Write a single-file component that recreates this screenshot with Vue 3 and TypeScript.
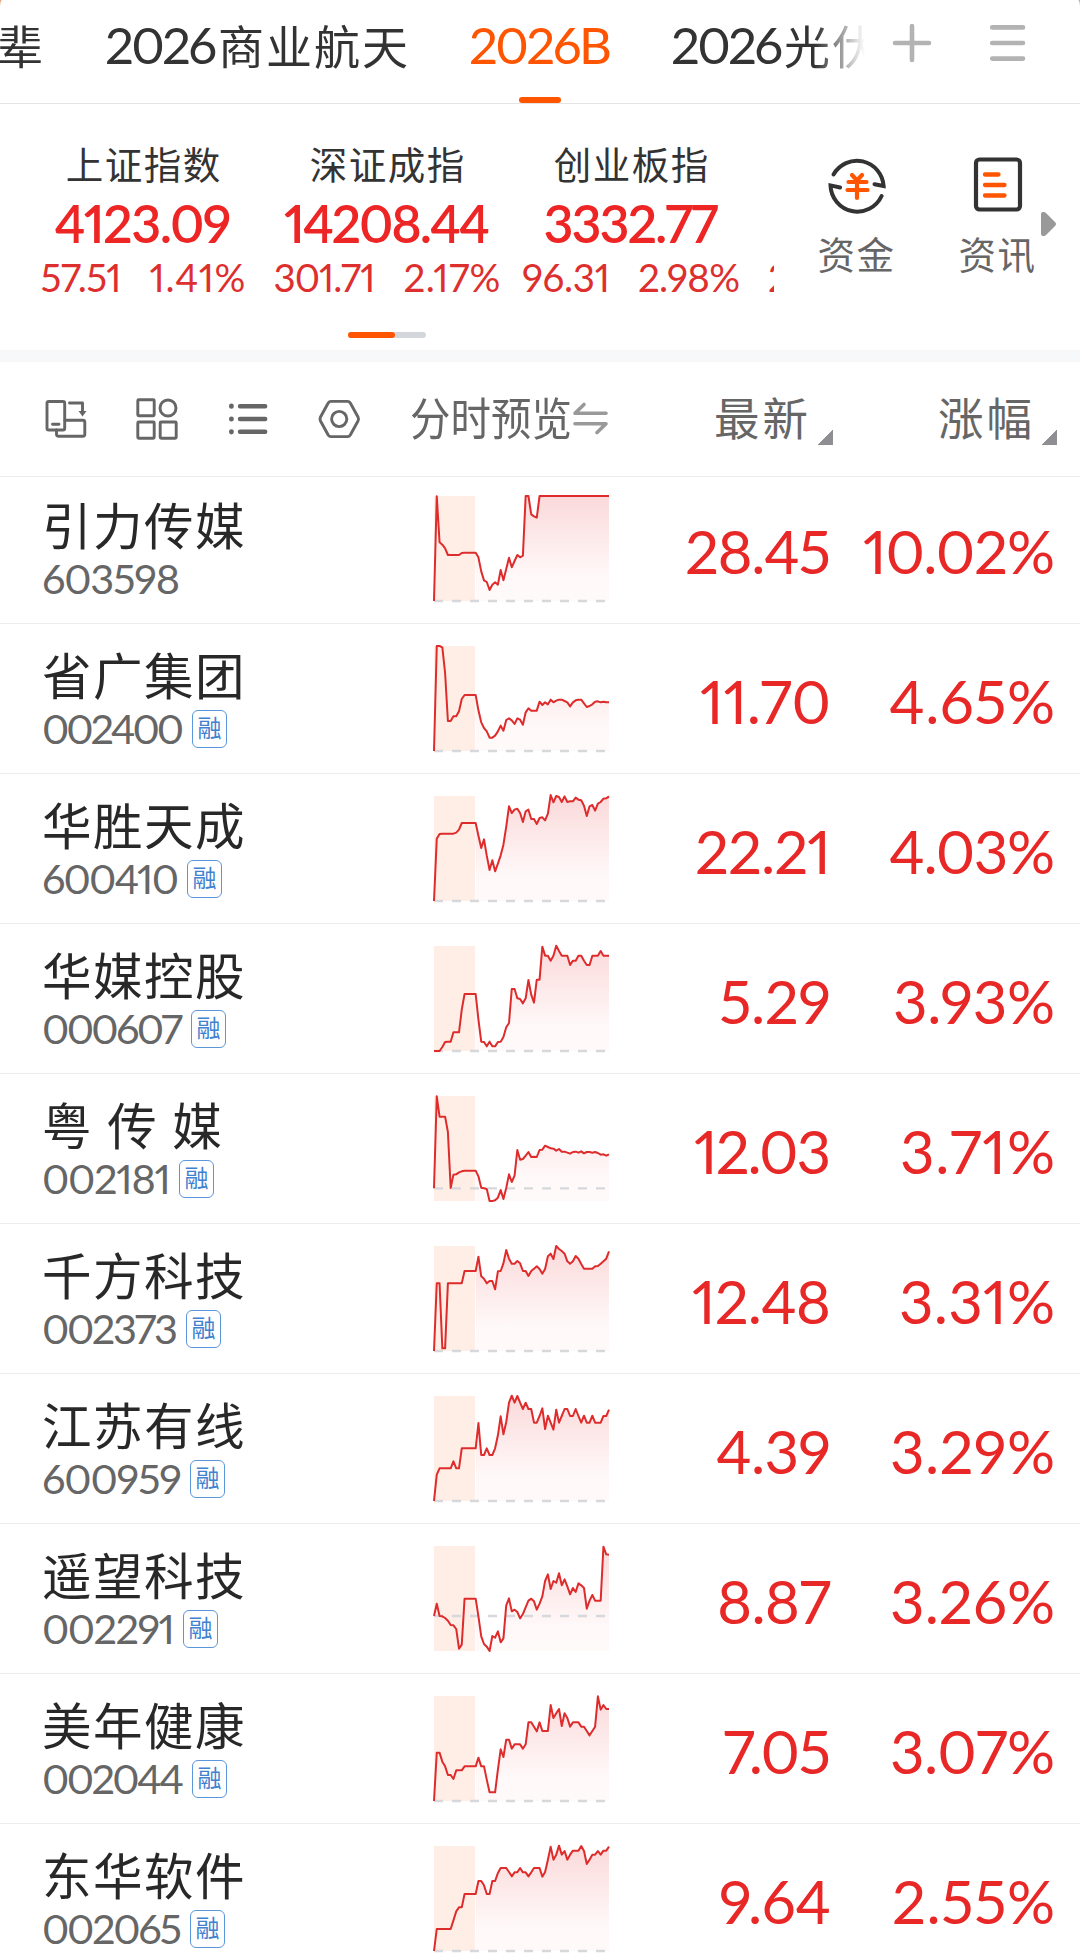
<script setup lang="ts">
import type { Directive } from 'vue'

interface IndexQuote {
  name: string
  value: string
  change: string
  pct: string
  widths: [number, number, number]
}

interface Stock {
  name: string
  code: string
  codeWidth: number
  margin: boolean
  price: string
  priceWidth: number
  pct: string
  pctWidth: number
  baseline: number
  series: string
}

// Tunes letter spacing so that a figure occupies the given width.
const vFit: Directive<HTMLElement, number> = {
  mounted(el, { value }) {
    const count = (el.textContent ?? '').trim().length
    const spacing = (value - el.getBoundingClientRect().width) / (count - 1)
    el.style.letterSpacing = `${spacing.toFixed(3)}px`
    el.style.marginRight = `${(-spacing).toFixed(3)}px`
  },
}

const indices: IndexQuote[] = [
  { name: '上证指数', value: '4123.09', change: '57.51', pct: '1.41%', widths: [177, 81, 96] },
  { name: '深证成指', value: '14208.44', change: '301.71', pct: '2.17%', widths: [206, 102, 97] },
  { name: '创业板指', value: '3332.77', change: '96.31', pct: '2.98%', widths: [175, 88, 102] },
]

const stocks: Stock[] = [
  {
    name: '引力传媒', code: '603598', codeWidth: 138, margin: false,
    price: '28.45', priceWidth: 146, pct: '10.02%', pctWidth: 192, baseline: 315,
    series: '315 1 139 146 157 177*5 171 170*5 184 226 253 258 282 266 259 266 222 253 219 185 214 195 177 184 179 0*2 55 61 65 0*26',
  },
  {
    name: '省广集团', code: '002400', codeWidth: 142, margin: true,
    price: '11.70', priceWidth: 131, pct: '4.65%', pctWidth: 166, baseline: 315,
    series: '315 0*2 4 81 225*2 211*2 196 159 147*5 193 229 246 256 275*2 269 256 239 254 222 217 223 234 217 221 236 199 187 194*3 167 177 169 175 161 169 164 161*2 165 169 181 169 163 161*2 172 183 180 175 167 166 169 167 169*2',
  },
  {
    name: '华胜天成', code: '600410', codeWidth: 137, margin: true,
    price: '22.21', priceWidth: 136, pct: '4.03%', pctWidth: 166, baseline: 315,
    series: '315 128 114 113*5 110 101 81*6 119 156 130 179 222 193 226 203 178 146 92 31 51 41 38 51 78 46 41 69*2 84 66 64 73 53 -3 19 0 3 18 1 18 16*2 5 11 13 29 60 31 27 44 23 18 8 7 1',
  },
  {
    name: '华媒控股', code: '000607', codeWidth: 141, margin: true,
    price: '5.29', priceWidth: 112, pct: '3.93%', pctWidth: 162, baseline: 315,
    series: '315*3 303 288 287*2 259*3 191 144*5 221 287 288 301 287 301*2 288 287 273 244 231 129*2 157 159 172 157 102 146 170 101*2 2 29*2 44 29 -1 15 29*3 57 44*2 29*2 44 57*2 29*3 15 29*3',
  },
  {
    name: '粤 传 媒', code: '002181', codeWidth: 129, margin: true,
    price: '12.03', priceWidth: 137, pct: '3.71%', pctWidth: 155, baseline: 277,
    series: '277 1 62*3 108 276 236 235 229 226 224*5 241 275 277 279 315*2 313 305 282 309 276 235 258 239 162 191 189 179 168 183 182 183 162 161 149 153 157 158 164 159 167*2 170 173 168 167 170 166 172 168*2 170 168 171 176 175 179 175',
  },
  {
    name: '千方科技', code: '002373', codeWidth: 136, margin: true,
    price: '12.48', priceWidth: 139, pct: '3.31%', pctWidth: 156, baseline: 315,
    series: '315 112*2 307*2 112*6 75*5 32 91 98 112 105*2 130 76 75 52 12 38 53*2 45 52 75*2 90 75 68 61 69 83 69 31 23 39 0 9 15 23 46 53 46 30 38 54 68*4 61 60 53 46 38 16',
  },
  {
    name: '江苏有线', code: '600959', codeWidth: 140, margin: true,
    price: '4.39', priceWidth: 115, pct: '3.29%', pctWidth: 165, baseline: 315,
    series: '315 236 217*5 196 217*2 157*6 81 177*2 157 177*2 157 118 61 115 78 20 -1 20 0 20 39 20 39*2 80*2 60 37 99 59 80 101 41 80 60 39*2 60*2 39 60 80 59 80*2 59 80*3 60*2 41',
  },
  {
    name: '遥望科技', code: '002291', codeWidth: 133, margin: true,
    price: '8.87', priceWidth: 114, pct: '3.26%', pctWidth: 165, baseline: 210,
    series: '210 173 210 211 216 224 237 238 249 308 296 158*5 211 271 294 302 315 270 275 256 289 277 178 157 196 191 198 217 204 184 164 158 166 191 173 151 105 85 129 105 110 82 118 100 121 145 126 138 112 118 126 188 164 147 164*3 2 25 26',
  },
  {
    name: '美年健康', code: '002044', codeWidth: 142, margin: true,
    price: '7.05', priceWidth: 108, pct: '3.07%', pctWidth: 165, baseline: 315,
    series: '315 170*2 197 211 237*2 249 223*3 211*5 185 211*2 251 289*3 221 160 183 131*2 158 145*3 158 145 79*2 92 106 79 105*3 27 66 52 39 90 52 66 92 79*3 92*2 105 118 105 92 1 41 27 39*2',
  },
  {
    name: '东华软件', code: '002065', codeWidth: 140, margin: true,
    price: '9.64', priceWidth: 112, pct: '2.55%', pctWidth: 163, baseline: 315,
    series: '315 249*6 223 196 184*2 144*5 105*2 118 144*2 105*2 81 66*3 78 91 79*2 66 79*2 91 79 66*3 92 78 41 2 41 26 -1 26 15 41 26 14*3 0 15 54 41 26*2 15 26 14*2 2',
  },
]

const STEP = 525 / 63
const OPENING = 15

// "v*n" stands for n equal samples.
function samples(series: string): number[] {
  return series.split(' ').flatMap((token) => {
    const [value, times] = token.split('*')
    return Array<number>(Number(times ?? 1)).fill(Number(value))
  })
}

function points(values: number[], from = 0): string {
  return values
    .slice(from)
    .map((y, i) => `${((i + from) * STEP).toFixed(1)},${y}`)
    .join(' ')
}

const rows = stocks.map((stock) => {
  const values = samples(stock.series)
  return {
    ...stock,
    line: points(values),
    area: `${OPENING * STEP},315 ${points(values, OPENING)} 525,315`,
  }
})
</script>

<template>
  <main class="screen">
    <header class="tabs">
      <div class="tab-strip">
        <span class="tab first"><span class="cjk">辈</span></span>
        <span class="tab second"><span v-fit="112" class="num">2026</span><span class="cjk">商业航天</span></span>
        <span class="tab active"><span v-fit="143" class="num">2026B</span></span>
        <span class="tab third"><span v-fit="112" class="num">2026</span><span class="cjk">光伏</span></span>
      </div>
      <svg class="plus" width="40" height="40" viewBox="0 0 40 40">
        <path d="M3 20H37M20 3V37" />
      </svg>
      <svg class="menu" width="38" height="40" viewBox="0 0 38 40">
        <path d="M3.2 4.4H34M3.2 20H34M3.2 35.6H34" />
      </svg>
    </header>

    <section class="market">
      <div class="quotes">
        <div v-for="item in indices" :key="item.name" class="quote">
          <div class="quote-name">{{ item.name }}</div>
          <div class="quote-value"><span v-fit="item.widths[0]">{{ item.value }}</span></div>
          <div class="quote-change">
            <span v-fit="item.widths[1]">{{ item.change }}</span>
            <span v-fit="item.widths[2]">{{ item.pct }}</span>
          </div>
        </div>
        <div class="quote next">
          <div class="quote-change"><span>2</span></div>
        </div>
      </div>
      <div class="shortcut">
        <svg width="62" height="62" viewBox="0 0 62 62">
          <g fill="none" stroke="#333" stroke-width="4" stroke-linecap="round">
            <path d="M7.5 21.5A26.8 27 0 0 1 57.6 33L48.5 31.2" />
            <path d="M55.6 43A26.8 27 0 0 1 4.5 32.4L14 34.5" />
          </g>
          <path d="M26 22L31 27.5L36 22M22.5 29H40.500M21.500 37H41.500M31 27.500V45" fill="none" stroke="#ff5500" stroke-width="4.200" stroke-linecap="round" />
        </svg>
        <span>资金</span>
      </div>
      <div class="shortcut news">
        <svg width="62" height="62" viewBox="0 0 62 62">
          <rect x="9" y="6.500" width="44" height="50" rx="3.500" fill="none" stroke="#333" stroke-width="4.200" />
          <path d="M18 21.500H31.500M18 32H37.500M18 42.500H37.500" stroke="#ff5500" stroke-width="4.300" stroke-linecap="round" />
        </svg>
        <span>资讯</span>
      </div>
      <svg class="more" width="16" height="26" viewBox="0 0 16 26">
        <path d="M0 3Q0 1 2 1Q3.500 .5 5 2L14 11Q16 13 14 15L5 24Q3.500 25.500 2 25Q0 25 0 23Z" fill="#999" />
      </svg>
      <div class="pager"><i></i></div>
    </section>

    <section class="toolbar">
      <svg class="tool" width="44" height="44" viewBox="0 0 44 44">
        <rect x="3" y="4.500" width="17.700" height="28.500" rx="1.800" />
        <path d="M8.500 27.200H15M25.500 6H38.500V15M12.500 33V37Q12.500 39.300 14.800 39.300H38.800Q40.800 39.300 40.800 37.300V25.200Q40.800 23.200 38.800 23.200H21" />
        <path d="M34.500 14H42.500L38.500 19.500Z" fill="#666" stroke="none" />
      </svg>
      <svg class="tool" width="44" height="44" viewBox="0 0 44 44">
        <rect x="2.800" y="2.800" width="16.400" height="16" rx="1" />
        <circle cx="33" cy="11" r="8" />
        <rect x="2.800" y="25" width="16.400" height="16.200" rx="1" />
        <rect x="25.200" y="25" width="16" height="16.200" rx="1" />
      </svg>
      <svg class="tool" width="44" height="44" viewBox="0 0 44 44">
        <path d="M14 9.200H39.200M14 22H39.200M14 34.800H39.200" stroke-width="4.400" />
        <path d="M5.400 9V9.400M5.400 21.800V22.200M5.400 34.600V35" stroke-width="4.800" />
      </svg>
      <svg class="tool" width="44" height="44" viewBox="0 0 44 44">
        <path d="M14 4.400H30.500Q32.300 4.400 33.300 6L41 20Q42 22 41 24L33.300 38Q32.300 39.600 30.500 39.600H14Q12.200 39.600 11.200 38L3.500 24Q2.500 22 3.500 20L11.200 6Q12.200 4.400 14 4.400Z" />
        <circle cx="22.200" cy="22" r="7.600" />
      </svg>
      <div class="preview"><span>分时预览</span></div>
      <svg class="swap" width="38" height="36" viewBox="0 0 38 36">
        <path d="M12 3.500L3 12.200H34M3 22.800H34L25 31.500" />
      </svg>
      <div class="sort latest">最新<i></i></div>
      <div class="sort gain">涨幅<i></i></div>
    </section>

    <svg class="defs" width="0" height="0">
      <defs>
        <linearGradient id="area" gradientUnits="userSpaceOnUse" x1="0" y1="0" x2="0" y2="315">
          <stop offset="0" stop-color="#fbd9da" />
          <stop offset=".75" stop-color="#fff8f8" />
          <stop offset="1" stop-color="#fffafa" />
        </linearGradient>
      </defs>
    </svg>

    <section class="list">
      <article v-for="row in rows" :key="row.code" class="row">
        <div class="stock">
          <div class="name">{{ row.name }}</div>
          <div class="code">
            <span v-fit="row.codeWidth">{{ row.code }}</span>
            <b v-if="row.margin">融</b>
          </div>
        </div>
        <svg class="chart" width="175" height="105" viewBox="0 0 525 315">
          <rect width="123" height="315" fill="#ffeee6" />
          <polygon :points="row.area" fill="url(#area)" />
          <path :d="`M0 ${row.baseline}H525`" stroke="#d6d8dc" stroke-width="7" stroke-dasharray="27 27" />
          <polyline :points="row.line" fill="none" stroke="#de2c2c" stroke-width="6" stroke-linejoin="round" />
        </svg>
        <div class="figure price"><span v-fit="row.priceWidth">{{ row.price }}</span></div>
        <div class="figure pct"><span v-fit="row.pctWidth">{{ row.pct }}</span></div>
      </article>
    </section>
  </main>
</template>

<style>
body {
  background: #e9a27c;
}
</style>

<style scoped>
.screen {
  width: 1080px;
  height: 1956px;
  overflow: hidden;
  background: #fff;
  border-radius: 2px 2px 0 0 / 8px 8px 0 0;
  font-family: Lato, "Noto Sans CJK SC", sans-serif;
  font-variant-numeric: proportional-nums;
  color: #333;
}
.screen svg {
  display: block;
  flex: none;
}
.screen .defs {
  position: absolute;
}

.tabs {
  display: flex;
  align-items: flex-start;
  height: 103px;
  border-bottom: 1px solid #e4e4e4;
}
.tab-strip {
  display: flex;
  width: 865px;
  height: 103px;
  overflow: hidden;
  mask-image: linear-gradient(to right, #000 815px, transparent 865px);
}
.tab {
  display: flex;
  flex: none;
  align-items: center;
  height: 88px;
  white-space: nowrap;
}
.num {
  font-size: 51px;
}
.cjk {
  font-size: 46px;
  letter-spacing: 2px;
}
.first {
  width: 105px;
  margin-left: -3px;
}
.second {
  width: 367px;
  padding-left: 3px;
}
.second .cjk,
.third .cjk {
  padding-left: 1px;
}
.active {
  position: relative;
  box-sizing: border-box;
  width: 202px;
  margin-left: -3px;
  color: #ff5500;
}
.active::after {
  content: "";
  position: absolute;
  left: 50px;
  top: 97px;
  width: 42px;
  height: 6px;
  border-radius: 3px;
  background: #ff5500;
}
.plus {
  margin: 23px 0 0 27px;
}
.menu {
  margin: 23px 0 0 57px;
}
.plus path,
.menu path {
  fill: none;
  stroke: #b3b3b3;
  stroke-width: 4.6;
  stroke-linecap: round;
}

.market {
  position: relative;
  display: flex;
  height: 246px;
  border-bottom: 12px solid #f7f8fa;
}
.quotes {
  display: flex;
  box-sizing: border-box;
  width: 774px;
  height: 200px;
  padding: 35px 0 0 21px;
  overflow: hidden;
}
.quote {
  flex: none;
  width: 244px;
  white-space: nowrap;
}
.quote-name {
  height: 54px;
  line-height: 51px;
  text-align: center;
  font-size: 37.5px;
  letter-spacing: 1.5px;
  text-indent: 1.5px;
}
.quote-value {
  display: flex;
  justify-content: center;
  height: 58px;
  line-height: 60px;
  font-size: 52px;
  font-weight: 600;
  color: #ed2525;
}
.quote-change {
  display: flex;
  justify-content: center;
  gap: 28px;
  height: 50px;
  line-height: 52px;
  font-size: 38.5px;
  color: #de2f2f;
}
.next .quote-change {
  justify-content: flex-start;
  padding: 112px 0 0 15px;
}
.shortcut {
  display: flex;
  flex-direction: column;
  align-items: center;
  width: 113px;
  padding-top: 49px;
  margin-left: 26px;
  font-size: 37.5px;
  line-height: 50px;
  letter-spacing: 1.5px;
  color: #666;
}
.shortcut span {
  padding-top: 15px;
}
.news {
  margin-left: 28px;
}
.more {
  position: absolute;
  left: 1041px;
  top: 107px;
}
.pager {
  position: absolute;
  left: 348px;
  top: 228px;
  width: 78px;
  height: 6px;
  border-radius: 3px;
  background: #d3d6da;
}
.pager i {
  display: block;
  width: 47px;
  height: 6px;
  border-radius: 3px;
  background: #ff5500;
}

.toolbar {
  display: flex;
  align-items: center;
  box-sizing: border-box;
  height: 115px;
  padding-left: 44px;
  border-bottom: 1px solid #ededed;
  font-size: 45.5px;
  line-height: 60px;
  color: #666;
}
.tool {
  margin-right: 47px;
  fill: none;
  stroke: #666;
  stroke-width: 2.9;
  stroke-linecap: round;
  stroke-linejoin: round;
}
.preview {
  width: 162px;
  margin-top: -1px;
  margin-left: 2px;
}
.preview span {
  display: block;
  width: 190px;
  transform: scaleX(0.89);
  transform-origin: 0 50%;
}
.swap {
  fill: none;
  stroke: #999;
  stroke-width: 3.6;
  stroke-linecap: round;
  stroke-linejoin: round;
}
.sort {
  display: flex;
  align-items: flex-end;
  margin-top: -1px;
  letter-spacing: 3px;
}
.sort i {
  width: 15px;
  height: 15px;
  margin: 0 0 4px 7px;
  background: linear-gradient(135deg, transparent 50%, #8e8e93 50%);
}
.latest {
  margin-left: 104px;
}
.gain {
  margin-left: 105px;
}

.list {
  margin-top: -3px;
}
.row {
  display: flex;
  box-sizing: border-box;
  height: 150px;
  border-bottom: 1px solid #ececec;
}
.stock {
  box-sizing: border-box;
  width: 434px;
  padding: 23px 0 0 42px;
}
.name {
  height: 57px;
  line-height: 58px;
  font-size: 49.5px;
  letter-spacing: 1.5px;
  color: #282828;
  white-space: pre;
}
.code {
  display: flex;
  align-items: center;
  height: 49px;
  font-size: 41.5px;
  line-height: 49px;
  color: #666;
}
.code b {
  box-sizing: border-box;
  width: 35px;
  height: 38px;
  margin-left: 8px;
  border: 1.5px solid #5a97dc;
  border-radius: 6px;
  font-size: 24px;
  font-weight: 400;
  line-height: 33px;
  text-align: center;
  color: #3f82cf;
}
.chart {
  margin-top: 22px;
  overflow: visible;
}
.figure {
  display: flex;
  justify-content: flex-end;
  height: 150px;
  font-size: 60px;
  line-height: 154px;
  color: #e82727;
}
.price {
  width: 222px;
}
.pct {
  width: 224px;
}
</style>
